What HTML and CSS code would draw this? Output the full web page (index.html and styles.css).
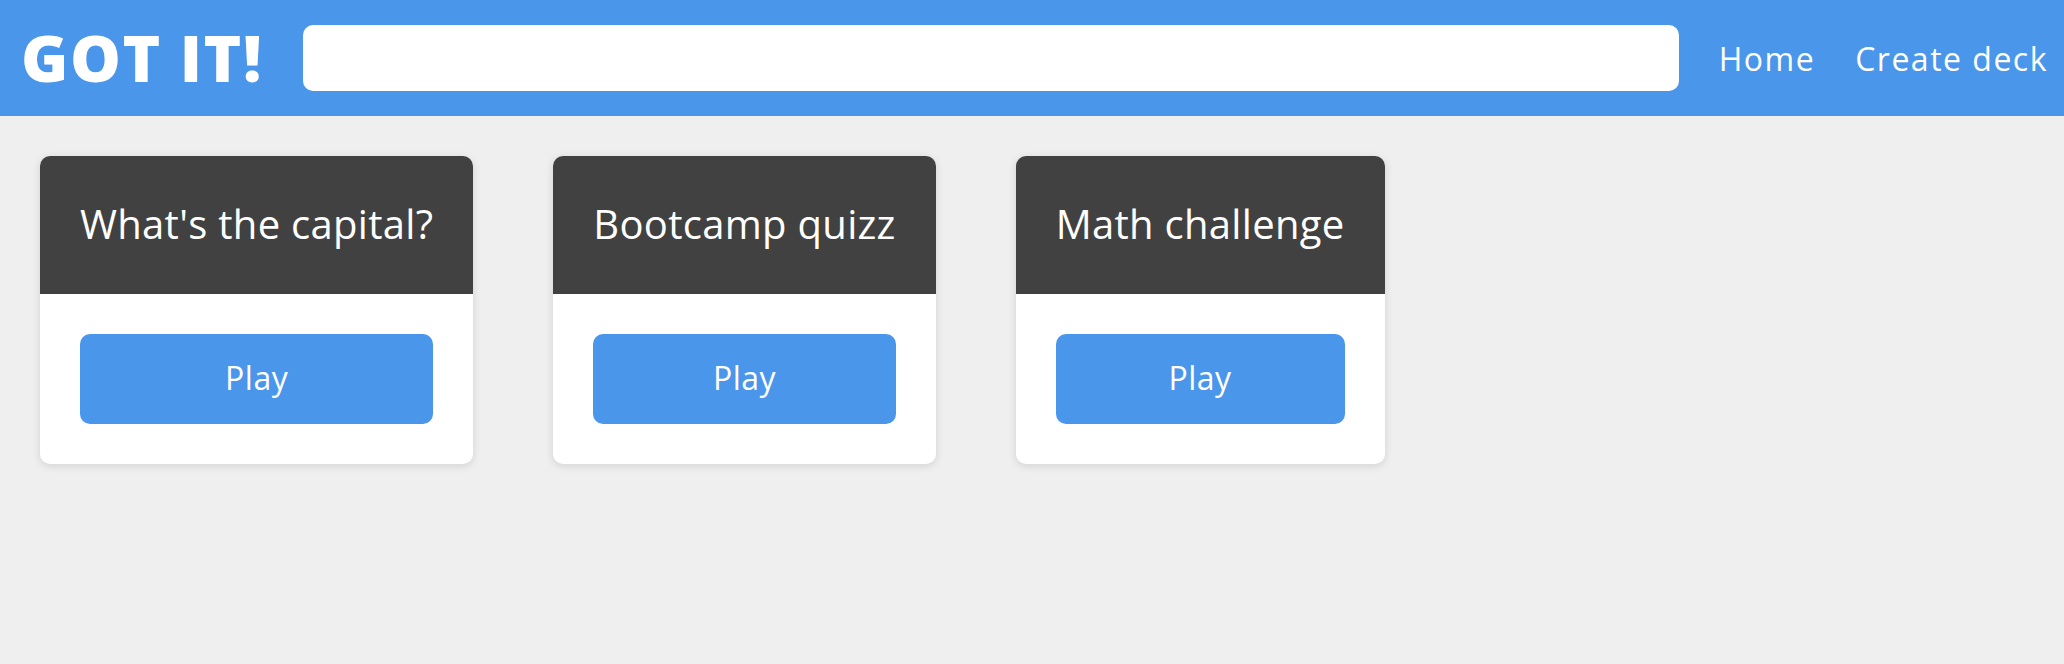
FILE: index.html
```html
<!DOCTYPE html>
<html lang="en">
<head>
<meta charset="utf-8">
<title>GOT IT!</title>
<link rel="stylesheet" href="styles.css">
</head>
<body>
<header class="topbar">
  <h1 class="logo">GOT IT!</h1>
  <input class="search" type="text" aria-label="Search">
  <nav class="nav">
    <a class="nav-link" href="#">Home</a>
    <a class="nav-link" href="#">Create deck</a>
  </nav>
</header>
<main class="decks">
  <div class="card">
    <div class="card-head">What's the capital?</div>
    <div class="card-body"><button class="play">Play</button></div>
  </div>
  <div class="card">
    <div class="card-head">Bootcamp quizz</div>
    <div class="card-body"><button class="play">Play</button></div>
  </div>
  <div class="card">
    <div class="card-head">Math challenge</div>
    <div class="card-body"><button class="play">Play</button></div>
  </div>
</main>
</body>
</html>
```
FILE: styles.css
```css
* { box-sizing: border-box; }
html, body {
  margin: 0;
  padding: 0;
  background: #efefef;
  font-family: "Open Sans", "Noto Sans", sans-serif;
  color: #fff;
}
.topbar {
  display: flex;
  align-items: center;
  gap: 40px;
  height: 116px;
  padding: 0 16px 0 21px;
  background: #4a96ea;
}
.logo {
  margin: 0;
  font-size: 64px;
  font-weight: 800;
  line-height: 1;
  letter-spacing: 1.5px;
  color: #fff;
  white-space: nowrap;
}
.search {
  flex: 1;
  height: 66px;
  border: none;
  border-radius: 10px;
  background: #fff;
  outline: none;
}
.nav {
  display: flex;
  gap: 40px;
}
.nav-link {
  color: #fff;
  text-decoration: none;
  font-size: 32px;
  font-weight: 400;
  letter-spacing: 1.5px;
  white-space: nowrap;
}
.decks {
  display: flex;
  align-items: flex-start;
  gap: 80px;
  padding: 40px;
}
.card {
  background: #fff;
  border-radius: 10px;
  overflow: hidden;
  box-shadow: 0 2px 8px rgba(0, 0, 0, 0.12);
}
.card-head {
  display: flex;
  align-items: center;
  justify-content: center;
  height: 138px;
  padding: 0 40px 4px;
  background: #414141;
  font-size: 40px;
  font-weight: 500;
  letter-spacing: 0.3px;
  white-space: nowrap;
}
.card-body {
  padding: 40px;
}
.play {
  display: block;
  width: 100%;
  height: 90px;
  padding: 0 0 3px;
  border: none;
  border-radius: 10px;
  background: #4a96ea;
  color: #fff;
  font-family: inherit;
  font-size: 32px;
  font-weight: 500;
  letter-spacing: 0.5px;
  cursor: pointer;
}
```
